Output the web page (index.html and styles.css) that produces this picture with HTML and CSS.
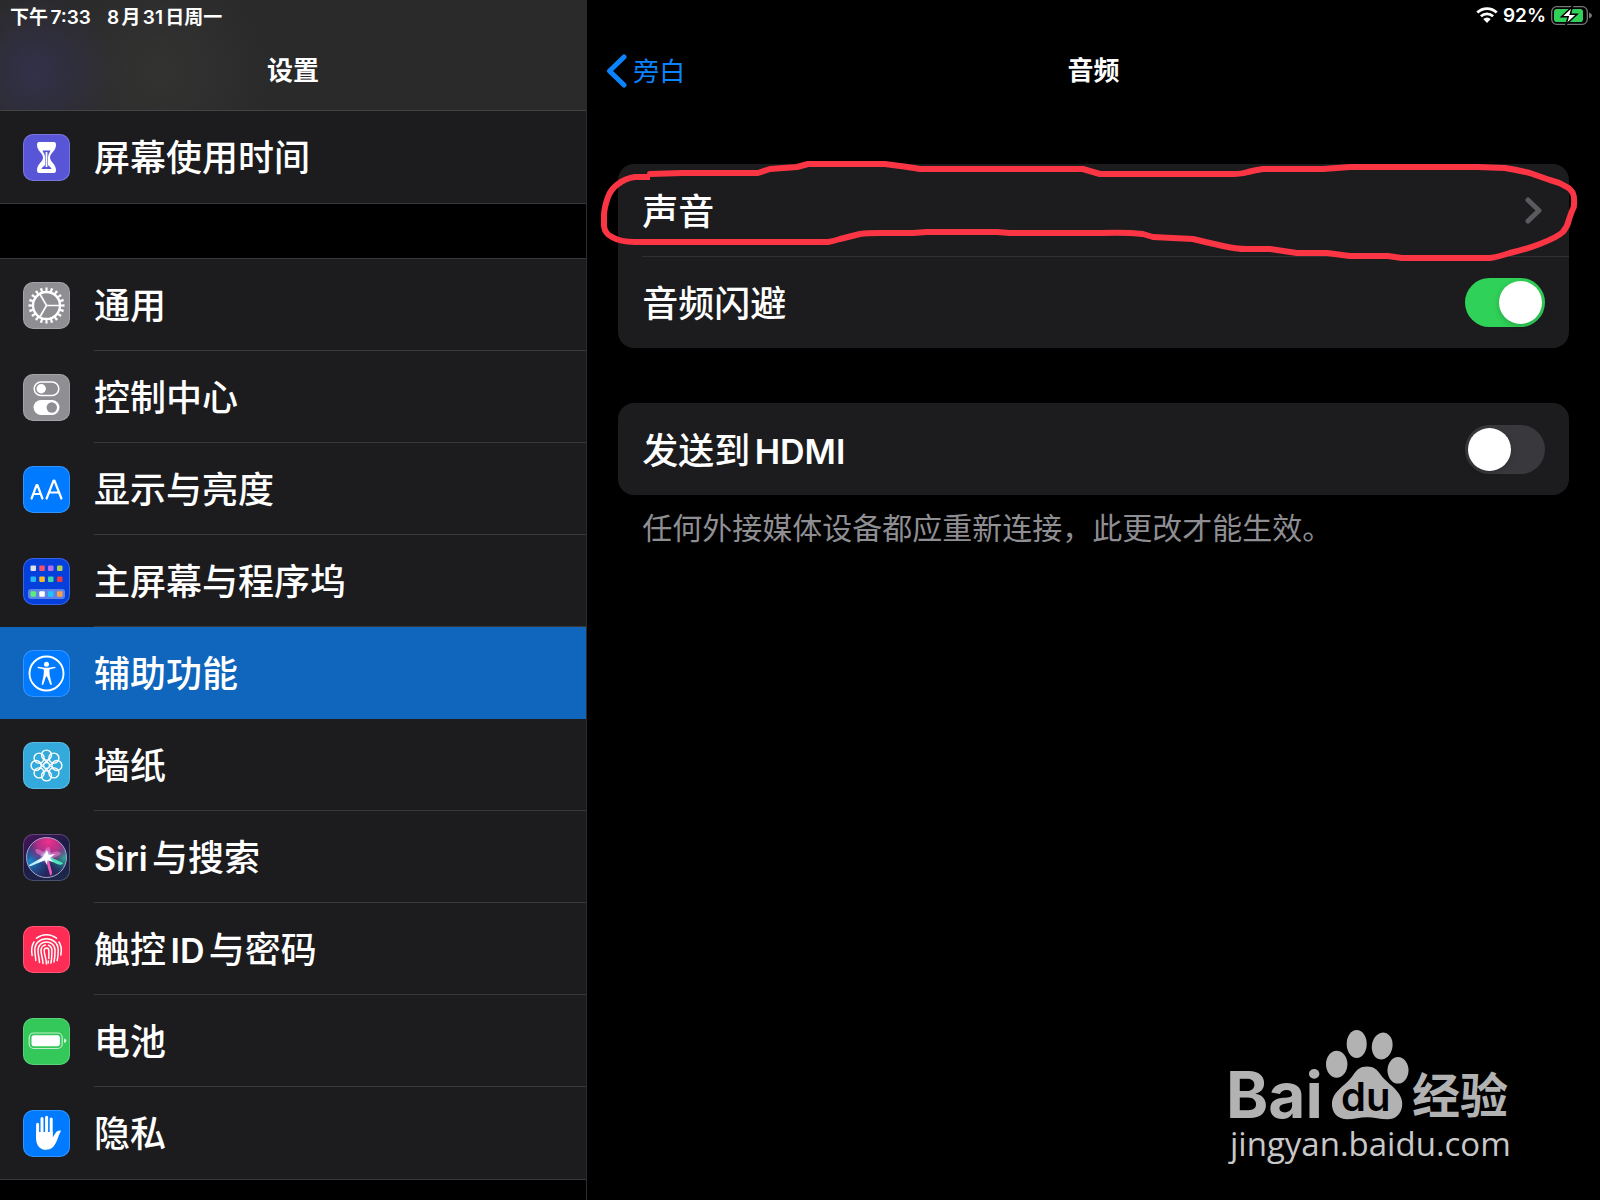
FILE: index.html
```html
<!DOCTYPE html>
<html lang="zh-CN">
<head>
	<meta charset="utf-8">
	<title>设置</title>
	<meta name="viewport" content="width=device-width, initial-scale=1">
	<link rel="stylesheet" href="styles.css">
</head>
<body>
<div class="screen">
	<aside class="sidebar">
		<header class="sidebar-head">
			<div class="status">
				<span>下午7:33</span>
				<span>8月31日周一</span>
			</div>
			<h1 class="title">设置</h1>
		</header>
		<nav>
			<ul class="menu">
				<li><a class="item" href="#screentime">
					<svg class="icon purple" viewBox="0 0 47 47">
						<path fill="#fff" d="M16 8h15q2 0 2 3c0 6-6 8-6 12.500s6 6.500 6 12.500q0 3-2 3H16q-2 0-2-3c0-6 6-8 6-12.500S14 17 14 11q0-3 2-3z"/>
						<path fill="#5856d6" d="M19.500 16.500h8c-1 2.500-2.500 4-2.500 7v7.500c1 1.300 3 2.300 3.500 4h-10c.5-1.700 2.500-2.700 3.500-4v-7.500c0-3-1.500-4.500-2.500-7z"/>
						<path stroke="#fff" stroke-width="1.800" d="M23.500 18v15"/>
					</svg>
					<span class="label">屏幕使用时间</span></a></li>
			</ul>
			<ul class="menu">
				<li><a class="item" href="#general">
					<svg class="icon gray" viewBox="0 0 47 47" fill="none" stroke="#fff">
						<circle cx="23.500" cy="23.500" r="16" stroke-width="4" pathLength="60" stroke-dasharray="1.300 1.700" stroke-dashoffset="0.650"/>
						<circle cx="23.500" cy="23.500" r="13.500" stroke-width="2.400"/>
						<path stroke-width="1.700" d="M37 23.500H23.500L16.700 11.800M23.500 23.500l-6.800 11.700"/>
					</svg>
					<span class="label">通用</span></a></li>
				<li><a class="item" href="#control">
					<svg class="icon gray" viewBox="0 0 47 47">
						<rect x="11.200" y="8" width="24.600" height="13.500" rx="6.700" fill="none" stroke="#fff" stroke-width="1.500"/>
						<circle cx="18.200" cy="14.700" r="4.700" fill="#fff"/>
						<rect x="10.500" y="26" width="26" height="15" rx="7.500" fill="#fff"/>
						<circle cx="28.800" cy="33.500" r="5.200" fill="#8e8e93"/>
					</svg>
					<span class="label">控制中心</span></a></li>
				<li><a class="item" href="#display">
					<svg class="icon blue" viewBox="0 0 47 47" fill="none" stroke="#fff" stroke-width="2.200" stroke-linecap="round" stroke-linejoin="round">
						<path d="M8.600 32.500l5-13.500h.8l5 13.500M10.300 28h7.400M23.600 32.500l7-18h.8l7 18M26 26.500h10"/>
					</svg>
					<span class="label">显示与亮度</span></a></li>
				<li><a class="item" href="#home">
					<svg class="icon navy" viewBox="0 0 47 47">
						<rect x="5" y="31" width="37" height="10" rx="3" fill="#fff" opacity=".35"/>
						<rect x="7.500" y="7.500" width="5.500" height="5.500" rx="1" fill="#dfe0ea"/>
						<rect x="16.300" y="7.500" width="5.500" height="5.500" rx="1" fill="#f5506e"/>
						<rect x="25" y="7.500" width="5.500" height="5.500" rx="1" fill="#b46cf5"/>
						<rect x="34" y="7.500" width="5.500" height="5.500" rx="1" fill="#a9d153"/>
						<rect x="7.500" y="18.500" width="5.500" height="5.500" rx="1" fill="#22b5fa"/>
						<rect x="16.300" y="18.500" width="5.500" height="5.500" rx="1" fill="#fbb928"/>
						<rect x="25" y="18.500" width="5.500" height="5.500" rx="1" fill="#3bd6ae"/>
						<rect x="34" y="18.500" width="5.500" height="5.500" rx="1" fill="#f23a3c"/>
						<rect x="7.500" y="33.200" width="5.500" height="5.500" rx="1" fill="#5cec7c"/>
						<rect x="16.300" y="33.200" width="5.500" height="5.500" rx="1" fill="#fff"/>
						<rect x="25" y="33.200" width="5.500" height="5.500" rx="1" fill="#20c3fd"/>
						<rect x="34" y="33.200" width="5.500" height="5.500" rx="1" fill="#fc9d4a"/>
					</svg>
					<span class="label">主屏幕与程序坞</span></a></li>
				<li><a class="item selected" href="#accessibility" aria-current="page">
					<svg class="icon blue" viewBox="0 0 47 47">
						<circle cx="23.500" cy="23.500" r="17" fill="none" stroke="#fff" stroke-width="1.900"/>
						<circle cx="23.500" cy="14.200" r="2.500" fill="#fff"/>
						<path fill="#fff" d="M15.300 16.700l6.200 1h4l6.200-1q1 .1.800 1.300l-5.500 1.300q-.6.200-.6 1.200l.3 4.700 2.200 9q-.8 1.200-1.700.3L24 26.500h-1l-2.700 8q-1 .9-1.700-.3l2-9 .3-4.700q0-1-.6-1.200L14.600 18q-.3-1.200.7-1.300z"/>
					</svg>
					<span class="label">辅助功能</span></a></li>
				<li><a class="item" href="#wallpaper">
					<svg class="icon sky" viewBox="0 0 47 47" fill="none" stroke="#fff" stroke-width="1.400">
						<circle cx="23.500" cy="13.100" r="5"/>
						<circle cx="30.900" cy="16.100" r="5"/>
						<circle cx="33.900" cy="23.500" r="5"/>
						<circle cx="30.900" cy="30.900" r="5"/>
						<circle cx="23.500" cy="33.900" r="5"/>
						<circle cx="16.100" cy="30.900" r="5"/>
						<circle cx="13.100" cy="23.500" r="5"/>
						<circle cx="16.100" cy="16.100" r="5"/>
						<path d="M23.500 20.500l-2.500-4M23.500 20.500l2.500-4M26.500 23.500l4-2.500M26.500 23.500l4 2.500M23.500 26.500l2.500 4M23.500 26.500l-2.500 4M20.500 23.500l-4 2.500M20.500 23.500l-4-2.500"/>
						<circle cx="23.500" cy="23.500" r="3"/>
					</svg>
					<span class="label">墙纸</span></a></li>
				<li><a class="item" href="#siri">
					<svg class="icon siri" viewBox="0 0 47 47">
						<defs>
							<radialGradient id="pink" cx=".55" cy=".1" r=".6"><stop offset="0" stop-color="#f0308c"/><stop offset=".5" stop-color="#d03090" stop-opacity=".8"/><stop offset="1" stop-color="#a03090" stop-opacity="0"/></radialGradient>
							<radialGradient id="cyan" cx=".1" cy=".6" r=".5"><stop offset="0" stop-color="#1c86c8"/><stop offset="1" stop-color="#1c5aa8" stop-opacity="0"/></radialGradient>
							<radialGradient id="teal" cx=".95" cy=".5" r=".45"><stop offset="0" stop-color="#28b39a"/><stop offset="1" stop-color="#1a6a80" stop-opacity="0"/></radialGradient>
							<radialGradient id="glow"><stop offset="0" stop-color="#fff"/><stop offset=".35" stop-color="#cfefff" stop-opacity=".8"/><stop offset="1" stop-color="#8ac8ff" stop-opacity="0"/></radialGradient>
						</defs>
						<circle cx="23.500" cy="23.500" r="20" fill="#26265c"/>
						<circle cx="23.500" cy="23.500" r="20" fill="url(#cyan)"/>
						<circle cx="23.500" cy="23.500" r="20" fill="url(#teal)"/>
						<circle cx="23.500" cy="23.500" r="20" fill="url(#pink)"/>
						<path fill="#e27fd0" opacity=".6" d="M23 24C14 21 11 17 13 15c4 0 9 3 10 9zM23 24c-3-6-1-11 3-11 3 3 1 8-3 11zM23 24c5-7 11-8 15-5-2 4-9 6-15 5z"/>
						<path fill="#eb5bb5" d="M22 23l5 18c1 1 2 0 2-3L25 23z"/>
						<path fill="#b8f0ff" d="M24 20.500L6 31q0 2 2 1l17-7z"/>
						<path fill="#51e3bb" d="M23 21l17 8q-1 3-6 1l-11-5z"/>
						<circle cx="23.500" cy="22.500" r="7" fill="url(#glow)"/>
						<path fill="#fff" d="M24 16l1.500 5 7-1-6 4 4 4-6-2-1 5-1.500-5-8 3 6-6z"/>
						<circle cx="23.500" cy="23.500" r="20" fill="none" stroke="#a7a9c9" stroke-width="1"/>
					</svg>
					<span class="label"><span class="latin">Siri</span>与搜索</span></a></li>
				<li><a class="item" href="#touchid">
					<svg class="icon red" viewBox="0 0 47 47" fill="none" stroke="#fff" stroke-width="1.500" stroke-linecap="round">
						<path d="M13.500 12.200c6-4.700 14-4.700 20 0"/>
						<path d="M9.200 29.500c-1-5-.8-9.500 1.800-13.700M36 16c2.600 4 2.800 8.500 1.800 13"/>
						<path d="M12.800 34.500c0-3-1-6-1-10.500 0-15 23.400-15 23.400 0 0 4-.2 7.500-1 10.500"/>
						<path d="M16.500 36.500c0-4-1.500-7-1.500-12 0-11.500 17-11.500 17 0 0 4.500-.2 8-1 11.500"/>
						<path d="M20 37.500c0-5-2-8-2-13 0-3 2-5.300 4.500-5.600M25.500 19.200c2.200.8 3.400 2.800 3.400 5.300 0 5-.2 9-1 12.500"/>
						<path d="M23.500 38c0-5-2.300-9-2.300-13.500 0-3.400 4.600-3.400 4.600 0 0 3 .2 5.500 0 8M25.300 35v2"/>
					</svg>
					<span class="label">触控<span class="latin">ID</span>与密码</span></a></li>
				<li><a class="item" href="#battery">
					<svg class="icon green" viewBox="0 0 47 47">
						<rect x="6.200" y="15" width="33" height="15.500" rx="4.500" fill="none" stroke="#fff" stroke-width="1.200" opacity=".7"/>
						<rect x="8.500" y="17.200" width="28.400" height="11" rx="2.500" fill="#fff"/>
						<path fill="#fff" opacity=".8" d="M41 20.500q2.400.6 2.400 2.300T41 25z"/>
					</svg>
					<span class="label">电池</span></a></li>
				<li><a class="item" href="#privacy">
					<svg class="icon blue" viewBox="0 0 47 47">
						<path stroke="#fff" stroke-width="3" stroke-linecap="round" d="M14.600 14.200V28M19 8.500V26M23.600 7.300V26M28.200 9V26"/>
						<path fill="#fff" d="M13.100 22h16.600v5.500l3.500-5.500q2-2.300 4.900-1.300-1 1.800-2.100 4.300c-1.500 4-3 8.500-5.500 11.500-3.500 4.300-10.500 4.200-14 1-2.700-2.500-3.400-6-3.400-10z"/>
					</svg>
					<span class="label">隐私</span></a></li>
			</ul>
		</nav>
	</aside>

	<main class="detail">
		<div class="status status-right">
			<svg class="wifi" viewBox="0 0 22 16" fill="none" stroke="#fff" stroke-width="2.800">
				<path d="M1.300 5.500c5.500-5.300 13.900-5.300 19.400 0M4.900 9.300c3.500-3.300 8.700-3.300 12.200 0"/>
				<path fill="#fff" stroke="none" d="M7.200 12q3.800-3 7.600 0L11 16z"/>
			</svg>
			<span>92%</span>
			<svg class="charge" viewBox="0 0 41 19">
				<rect x=".7" y=".7" width="35.600" height="17.600" rx="5" fill="none" stroke="#77777a" stroke-width="1.300"/>
				<rect x="3" y="3" width="29" height="13" rx="2.800" fill="#30d158"/>
				<path fill="#77777a" d="M38 6.500q3 1 3 3t-3 3z"/>
				<path fill="#fff" stroke="#000" stroke-width="1.500" d="M21.500.5L10.500 10.700h6.700L15 18.500l11-10.200h-6.700z"/>
			</svg>
		</div>
		<header class="navbar">
			<a class="back" href="#voiceover">
				<svg class="back-arrow" viewBox="0 0 21 34" fill="none" stroke="#0a84ff" stroke-width="5" stroke-linecap="round" stroke-linejoin="round"><path d="M18 3L3.500 17 18 31"/></svg>
				<span class="text">旁白</span>
			</a>
			<h2 class="title">音频</h2>
		</header>

		<section class="card">
			<a class="row" href="#sound">
				<span class="text">声音</span>
				<svg class="chevron" viewBox="0 0 17 27" fill="none" stroke="#5a5a5f" stroke-width="5" stroke-linecap="round" stroke-linejoin="round"><path d="M3 3l11 10.500L3 24"/></svg>
			</a>
			<label class="row" for="ducking">
				<span class="text">音频闪避</span>
				<input class="switch" type="checkbox" id="ducking" checked>
			</label>
			<!-- hand drawn ring round the first row -->
			<svg class="ring" viewBox="600 156 981 108" preserveAspectRatio="none" aria-hidden="true">
				<path d="M650 177H635Q626 178 618 184Q611 189 608 197Q604 208 604 216V226Q605 234 612 237Q620 242 635 242H828Q834 241 840 239Q852 236 860 234Q867 233 880 233H913L927 232H997L1010 233H1100Q1126 232 1143 234L1153 237L1193 239Q1205 242 1223 246Q1236 249 1247 249H1270L1297 253H1327L1350 256H1388L1402 258H1490Q1498 257 1510 253Q1527 249 1540 244Q1558 237 1563 232Q1568 226 1569 220Q1572 211 1574 207Q1575 197 1573 193Q1570 188 1567 187Q1559 182 1550 180L1530 173Q1518 170 1505 168L1478 167H1350L1323 169H1263Q1256 170 1248 172Q1242 174 1233 174H1100L1083 169H920Q908 167 900 166L885 164H808L797 167L770 169L758 173L683 173L650 174V177"/>
			</svg>
		</section>

		<section class="card">
			<label class="row" for="hdmi">
				<span class="text">发送到<span class="latin">HDMI</span></span>
				<input class="switch" type="checkbox" id="hdmi">
			</label>
		</section>
		<p class="note">任何外接媒体设备都应重新连接，此更改才能生效。</p>

		<svg class="watermark" viewBox="27 18 287 140" fill="#b2b2b2">
			<text class="wm-logo" x="26" y="108">Bai</text>
			<ellipse cx="136.700" cy="54.300" rx="10.700" ry="13.500"/>
			<ellipse cx="156.700" cy="34" rx="10" ry="14"/>
			<ellipse cx="182.200" cy="36" rx="10.300" ry="13.500" transform="rotate(10 182.200 36)"/>
			<ellipse cx="198" cy="60.300" rx="10.500" ry="13.300"/>
			<path d="M167 56.500c7 0 10 3 13.500 8 5 7 10 9.500 15 15 5.500 6 7.500 11 6.500 17.500-1.500 8-7 12-14 12.300-7 .2-14-2-21-2s-13 2-20 2c-8-.3-13.500-4.500-14.800-12.300-1-7 1.300-12 6.800-17.500 5-5 10-8 14.500-15 3.500-5 6.500-8 13.500-8z"/>
			<text class="wm-du" x="141" y="101">du</text>
			<text class="wm-cjk" x="212" y="103">经验</text>
			<text class="wm-url" x="30" y="146">jingyan.baidu.com</text>
		</svg>
	</main>
</div>
</body>
</html>
```
FILE: styles.css
```css
*{
	box-sizing: border-box;
}
body{
	margin: 0;
	background: #000;
	color: #fff;
	font-family: "Inter","Noto Sans CJK SC",sans-serif;
	font-size: 36px;
	font-weight: 500;
}
a{
	color: inherit;
	text-decoration: none;
}
.screen{
	display: grid;
	grid-template-columns: 36.7% 1fr;
	min-height: 100vh;
}
.sidebar{
	border-right: 1px solid #2c2c2e;
}
.sidebar-head{
	height: 111px;
	border-bottom: 1px solid #434345;
	background: radial-gradient(circle at 36px 72px, #33314a 0, rgba(51,49,66,0) 80px), radial-gradient(circle at 160px 72px, #333332 0, rgba(42,42,43,0) 110px), #2a2a2b;
}
.status{
	display: flex;
	align-items: center;
	gap: 16px;
	height: 30px;
	padding: 0 10px;
	font-size: 19px;
	font-weight: 600;
	text-autospace: normal;
}
.status-right{
	justify-content: flex-end;
	gap: 5px;
	padding: 0 8px;
}
.wifi{
	width: 22px;
	height: 16px;
}
.charge{
	width: 41px;
	height: 19px;
}
.title{
	margin: 0;
	font-size: 26px;
	font-weight: 600;
	line-height: 82px;
	text-align: center;
}

/* sidebar list */
.menu{
	list-style: none;
	margin: 0 0 54px;
	padding: 0;
	background: #1c1c1e;
	border-bottom: 1px solid #38383a;
}
.menu + .menu{
	margin: 0;
	border-top: 1px solid #38383a;
}
.item{
	display: flex;
	align-items: center;
	gap: 24px;
	height: 92px;
	padding-left: 23px;
}
.icon{
	flex: none;
	width: 47px;
	height: 47px;
	border-radius: 10px;
	box-shadow: inset 0 0 0 1px rgba(255,255,255,0.2);
}
.label{
	flex: 1;
	align-self: stretch;
	padding-top: 3px;
	border-bottom: 1px solid #38383a;
	line-height: 88px;
	text-autospace: normal;
}
li:last-child .label{
	border-bottom: none;
}
.selected,
.selected .label{
	background: #1065bc;
	border-color: #1065bc;
}
.latin{
	font-size: 34px;
	font-weight: 600;
}
.purple{ background: #5856d6; }
.gray{ background: #8e8e93; }
.blue{ background: #007aff; }
.navy{ background: #0540dc; }
.sky{ background: #34aadc; }
.red{ background: #ff2d55; }
.green{ background: #34c759; }
.siri{ background: linear-gradient(150deg, #47145c, #1d1b45 45%, #1b2a4c); }

/* right side */
.navbar{
	display: grid;
	grid-template-columns: 1fr auto 1fr;
	align-items: center;
	height: 82px;
	margin-bottom: 52px;
	padding: 0 19px;
}
.back{
	display: flex;
	align-items: center;
	gap: 6px;
	color: #0a84ff;
	font-size: 26px;
	font-weight: 400;
}
.back-arrow{
	width: 21px;
	height: 34px;
}
.text{
	padding-bottom: 3px;
	text-autospace: normal;
}
.card{
	position: relative;
	margin: 0 31px 55px;
	background: #1c1c1e;
	border-radius: 16px;
}
.row{
	display: flex;
	align-items: center;
	justify-content: space-between;
	height: 92px;
	margin-left: 24px;
	padding-right: 24px;
}
.row + .row{
	border-top: 1px solid #303032;
}
.chevron{
	width: 17px;
	height: 27px;
	margin-right: 3px;
}
.switch{
	appearance: none;
	width: 80px;
	height: 49px;
	margin: 0;
	padding: 3px;
	border-radius: 25px;
	background: #39393d;
}
.switch::before{
	content: "";
	display: block;
	width: 43px;
	height: 43px;
	border-radius: 50%;
	background: #fff;
	box-shadow: 0 2px 6px rgba(0,0,0,0.2);
}
.switch:checked{
	background: #30d158;
}
.switch:checked::before{
	margin-left: auto;
}
.ring{
	position: absolute;
	top: -8px;
	left: -18px;
	width: calc(100% + 30px);
	height: 108px;
	pointer-events: none;
	fill: none;
	stroke: #fc3545;
	stroke-width: 6px;
	stroke-linejoin: round;
}
.note{
	margin: -43px 55px 0;
	color: #8e8e93;
	font-size: 30px;
	font-weight: 400;
	line-height: 42px;
}

/* logo laid over the corner of the screen */
.watermark{
	position: absolute;
	right: 86px;
	bottom: 32px;
	width: 287px;
	height: 140px;
}
.wm-logo{
	font-size: 64px;
	font-weight: 700;
}
.wm-du{
	font-size: 40px;
	font-weight: 600;
	fill: #000;
}
.wm-cjk{
	font-size: 48px;
	font-weight: 700;
}
.wm-url{
	font-family: "Open Sans","Noto Sans",sans-serif;
	font-size: 33px;
	font-weight: 400;
	fill: #c8c8c8;
}
```
